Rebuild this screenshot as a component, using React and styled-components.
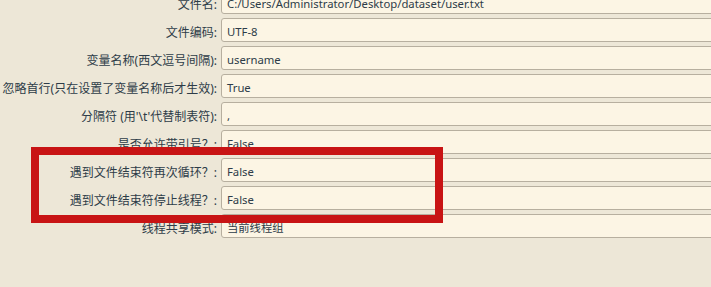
import React from 'react';
import styled, { createGlobalStyle } from 'styled-components';

const GlobalStyle = createGlobalStyle`
  html, body {
    margin: 0;
    padding: 0;
    background: #ede7d7;
    overflow: hidden;
  }
`;

const rows = [
  ['文件名:', 'C:/Users/Administrator/Desktop/dataset/user.txt'],
  ['文件编码:', 'UTF-8'],
  ['变量名称(西文逗号间隔):', 'username'],
  ['忽略首行(只在设置了变量名称后才生效):', 'True'],
  ["分隔符 (用'\\t'代替制表符):", ','],
  ['是否允许带引号？:', 'False'],
  ['遇到文件结束符再次循环？:', 'False'],
  ['遇到文件结束符停止线程？:', 'False'],
  ['线程共享模式:', '当前线程组'],
];

const App = () => {
  return (
    <Page>
      <GlobalStyle />
      <Form>
        {rows.map(([label, value]) => (
          <Row key={label}>
            <Label>{label}</Label>
            <Field>{value}</Field>
          </Row>
        ))}
      </Form>
      <Highlight />
    </Page>
  );
};

const Page = styled.div`
  position: relative;
  width: 711px;
  height: 287px;
  overflow: hidden;
  font-family: "Noto Sans", "Noto Sans CJK SC", sans-serif;
  font-size: 12px;
  color: #2d3c48;
`;

const Form = styled.div`
  display: flex;
  flex-direction: column;
  gap: 4px;
  margin-top: -10px;
`;

const Row = styled.div`
  display: flex;
  align-items: center;
  gap: 4px;
  height: 24px;
`;

const Label = styled.div`
  width: 217px;
  flex: none;
  padding-top: 3px;
  text-align: right;
  white-space: nowrap;
`;

const Field = styled.div`
  box-sizing: border-box;
  flex: none;
  width: 520px;
  height: 24px;
  line-height: 22px;
  padding: 2px 5px 0;
  font-size: 11.3px;
  background: #fcf5e4;
  border: 1px solid #b7af9f;
  border-radius: 3px;
  white-space: nowrap;
  overflow: hidden;
`;

const Highlight = styled.div`
  position: absolute;
  left: 31px;
  top: 147px;
  width: 412px;
  height: 76px;
  box-sizing: border-box;
  border: 8px solid #c81414;
  pointer-events: none;
`;

export default App;
